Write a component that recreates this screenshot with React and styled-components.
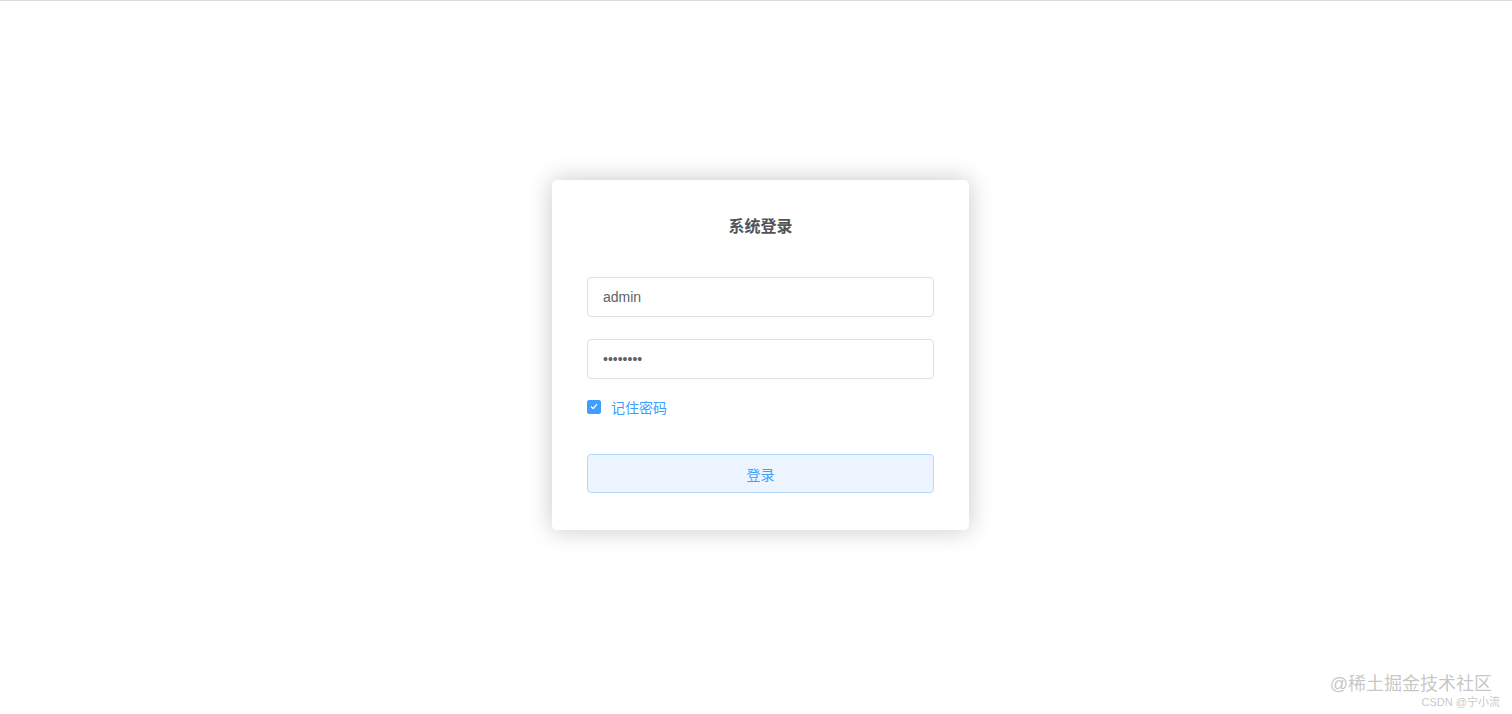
import styled, { createGlobalStyle } from 'styled-components';

const GlobalStyle = createGlobalStyle`
	html, body {
		margin: 0;
		padding: 0;
		background: #fff;
		font-family: "Helvetica Neue", Helvetica, "PingFang SC", "Liberation Sans", "Noto Sans CJK SC", sans-serif;
	}
`;

const Page = styled.div`
	position: relative;
	height: 714px;
	border-top: 1px solid #dcdcdc;
	box-sizing: border-box;
	overflow: hidden;
	display: flex;
	justify-content: center;
	padding-left: 9px;
	padding-top: 179px;
`;

const Card = styled.form`
	width: 417px;
	height: 350px;
	box-sizing: border-box;
	padding: 35px 35px 15px;
	background: #fff;
	border-radius: 5px;
	box-shadow: 0 0 25px #cac6c6;
	display: flex;
	flex-direction: column;
`;

const Title = styled.h3`
	margin: 0 0 38px;
	height: 24px;
	line-height: 24px;
	text-align: center;
	font-size: 16px;
	font-weight: 700;
	color: #505458;
`;

const Field = styled.div`
	margin-bottom: ${(p) => p.$gap || 22}px;
`;

const Input = styled.input`
	display: block;
	width: 100%;
	height: 40px;
	box-sizing: border-box;
	padding: 0 15px;
	border: 1px solid #dcdfe6;
	border-radius: 4px;
	font-family: inherit;
	font-size: 14px;
	color: #606266;
	outline: none;
	background: #fff;
`;

const CheckRow = styled.label`
	display: flex;
	align-items: center;
	gap: 10px;
	height: 19px;
	font-size: 14px;
	color: #409eff;
	cursor: pointer;
`;

const CheckBox = styled.span`
	width: 14px;
	height: 14px;
	box-sizing: border-box;
	border-radius: 2px;
	background: #409eff;
	border: 1px solid #409eff;
	display: flex;
	align-items: center;
	justify-content: center;
`;

const Button = styled.button`
	width: 100%;
	height: 39px;
	box-sizing: border-box;
	border: 1px solid #b3d8ff;
	border-radius: 4px;
	background: #ecf5ff;
	color: #409eff;
	font-family: inherit;
	font-size: 14px;
	cursor: pointer;
`;

const Watermark = styled.div`
	position: absolute;
	right: 12px;
	bottom: 5px;
	display: flex;
	flex-direction: column;
	align-items: flex-end;
	color: rgba(150, 150, 150, 0.55);
	font-family: "Liberation Sans", "Noto Sans CJK SC", sans-serif;
`;

const MarkMain = styled.div`
	font-size: 18px;
	line-height: 22px;
	margin-right: 8px;
`;

const MarkSub = styled.div`
	font-size: 11px;
	line-height: 14px;
`;

export default function App() {
	return (
		<>
			<GlobalStyle />
			<Page>
				<Card onSubmit={(e) => e.preventDefault()}>
					<Title>系统登录</Title>
					<Field>
						<Input type="text" defaultValue="admin" />
					</Field>
					<Field $gap={18}>
						<Input type="password" defaultValue="12345678" />
					</Field>
					<Field $gap={38}>
						<CheckRow>
							<CheckBox>
								<svg width="8" height="7" viewBox="0 0 8 7">
									<path d="M1 3.5 L3.2 5.6 L7 1.2" fill="none" stroke="#fff" strokeWidth="1.2" />
								</svg>
							</CheckBox>
							记住密码
						</CheckRow>
					</Field>
					<Button type="submit">登录</Button>
				</Card>
				<Watermark>
					<MarkMain>@稀土掘金技术社区</MarkMain>
					<MarkSub>CSDN @宁小流</MarkSub>
				</Watermark>
			</Page>
		</>
	);
}
